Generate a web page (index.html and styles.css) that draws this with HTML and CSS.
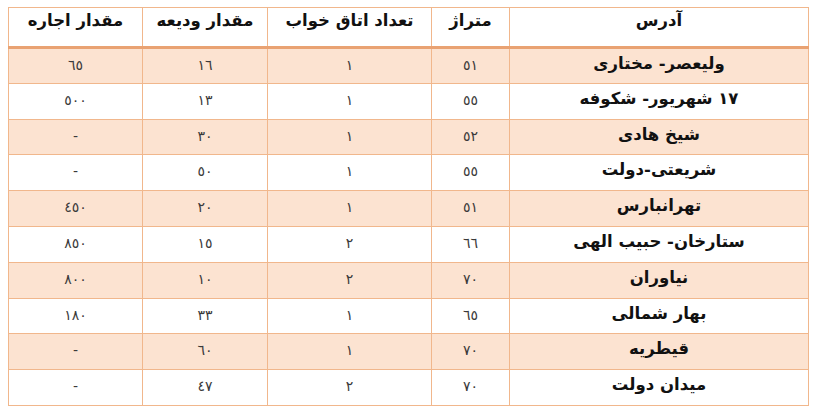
FILE: index.html
```html
<!DOCTYPE html>
<html lang="fa" dir="rtl">
<head>
<meta charset="utf-8">
<link rel="stylesheet" href="styles.css">
</head>
<body>
<table class="rent">
  <colgroup>
    <col class="c-addr"><col class="c-area"><col class="c-room"><col class="c-dep"><col class="c-rent">
  </colgroup>
  <thead>
    <tr><th class="addr-h">آدرس</th><th>متراژ</th><th>تعداد اتاق خواب</th><th>مقدار ودیعه</th><th>مقدار اجاره</th></tr>
  </thead>
  <tbody>
    <tr class="odd"><td class="addr">ولیعصر- مختاری</td><td>٥١</td><td>١</td><td>١٦</td><td>٦٥</td></tr>
    <tr><td class="addr">١٧ شهریور- شکوفه</td><td>٥٥</td><td>١</td><td>١٣</td><td>٥٠٠</td></tr>
    <tr class="odd"><td class="addr">شیخ هادی</td><td>٥٢</td><td>١</td><td>٣٠</td><td>-</td></tr>
    <tr><td class="addr">شریعتی-دولت</td><td>٥٥</td><td>١</td><td>٥٠</td><td>-</td></tr>
    <tr class="odd"><td class="addr">تهرانبارس</td><td>٥١</td><td>١</td><td>٢٠</td><td>٤٥٠</td></tr>
    <tr><td class="addr">ستارخان- حبیب الهی</td><td>٦٦</td><td>٢</td><td>١٥</td><td>٨٥٠</td></tr>
    <tr class="odd"><td class="addr">نیاوران</td><td>٧٠</td><td>٢</td><td>١٠</td><td>٨٠٠</td></tr>
    <tr><td class="addr">بهار شمالی</td><td>٦٥</td><td>١</td><td>٣٣</td><td>١٨٠</td></tr>
    <tr class="odd"><td class="addr">قیطریه</td><td>٧٠</td><td>١</td><td>٦٠</td><td>-</td></tr>
    <tr><td class="addr">میدان دولت</td><td>٧٠</td><td>٢</td><td>٤٧</td><td>-</td></tr>
  </tbody>
</table>
</body>
</html>
```

FILE: styles.css
```css
html, body {
  margin: 0;
  padding: 0;
  background: #ffffff;
}
body {
  padding: 7px 8px 0 10px;
  font-family: "DejaVu Sans", sans-serif;
}
.rent {
  width: 800px;
  border-collapse: collapse;
  table-layout: fixed;
  direction: rtl;
}
.c-addr { width: 299px; }
.c-area { width: 78px; }
.c-room { width: 164px; }
.c-dep { width: 125px; }
.c-rent { width: 134px; }
.rent th,
.rent td {
  border: 1px solid #f1b78c;
  text-align: center;
  vertical-align: top;
  padding: 0;
}
.rent th {
  height: 37px;
  font-size: 16.5px;
  font-weight: bold;
  color: #111;
  line-height: 24px;
  padding-top: 1px;
  border-bottom: 3px solid #e9a272;
}
.rent td {
  height: 35.8px;
  font-size: 14px;
  color: #3a3a3a;
  line-height: 22px;
  padding-top: 5px;
  box-sizing: border-box;
}
.rent td.addr {
  font-size: 16.5px;
  font-weight: bold;
  color: #111;
  padding-top: 3px;
  line-height: 24px;
}
.rent tr.odd td {
  background: #fce3d1;
}
```
